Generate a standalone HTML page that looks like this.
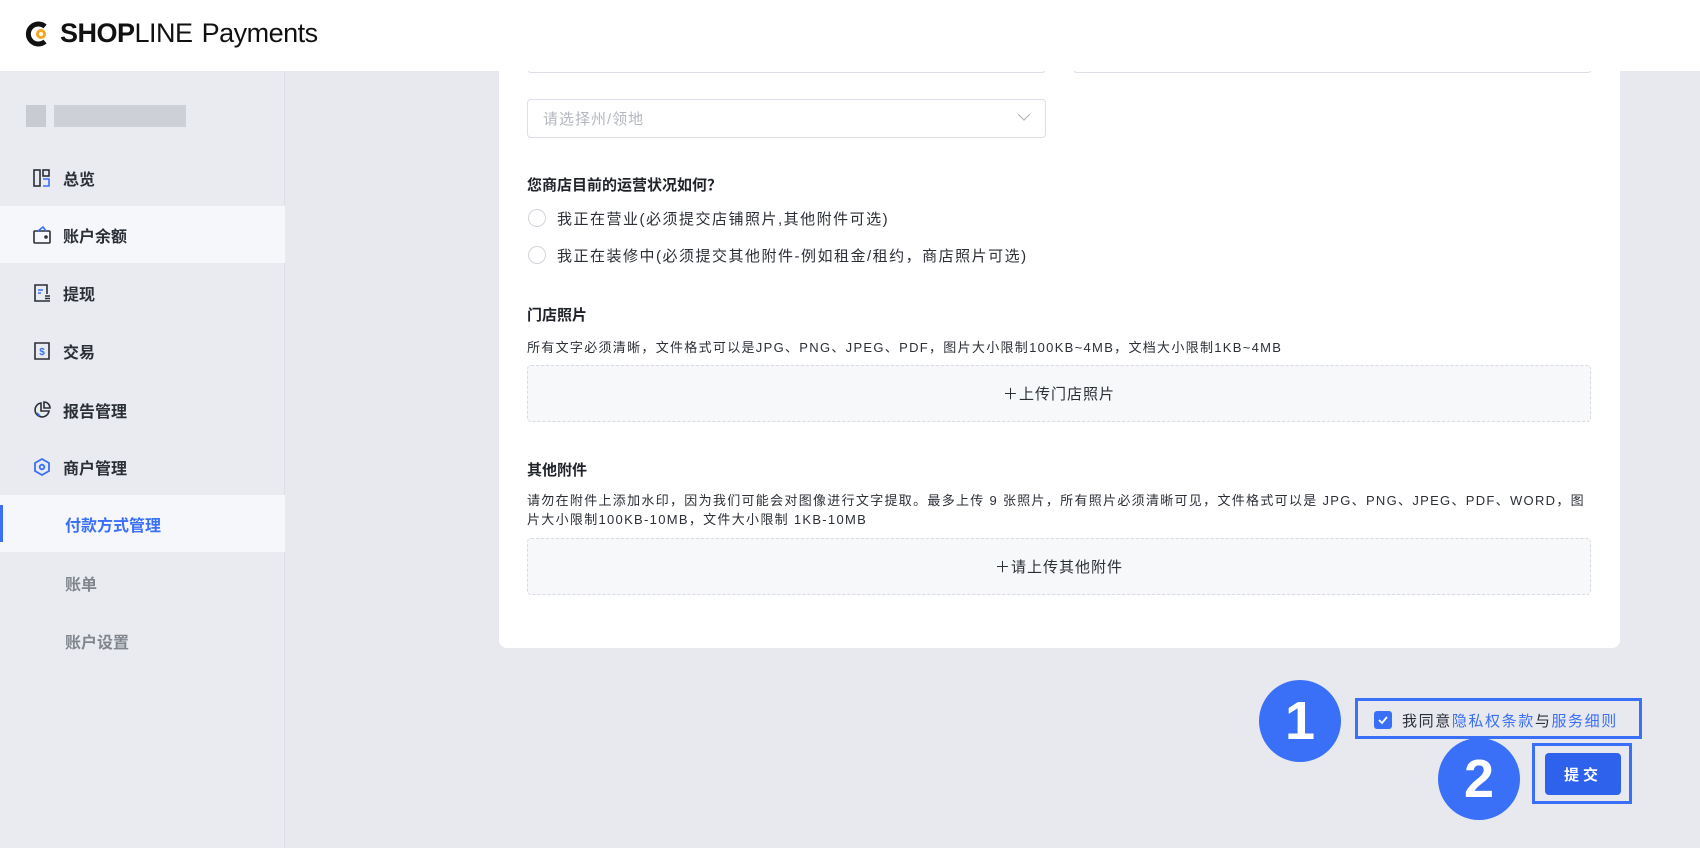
<!DOCTYPE html>
<html><head><meta charset="utf-8"><style>
*{margin:0;padding:0;box-sizing:border-box}
body{width:1700px;height:848px;overflow:hidden;background:#e7e9ee;font-family:"Liberation Sans","Noto Sans CJK SC",sans-serif;color:#1f2329;position:relative}
.abs{position:absolute}
.hdr{left:0;top:0;width:1700px;height:71px;background:#fff;z-index:5}
.side{left:0;top:71px;width:285px;height:777px;background:#e9ebf0;border-right:1px solid #dcdfe5}
.item{position:absolute;left:0;width:285px;height:57px;display:flex;align-items:center;font-size:16px;font-weight:bold;color:#2b2f36}
.item svg{position:absolute;left:33px}
.item span{position:absolute;left:63px}
.card{left:499px;top:60px;width:1121px;height:588px;background:#fff;border-radius:8px}
.t{position:absolute;white-space:nowrap}
.radio{position:absolute;left:528px;width:18px;height:18px;border:1px solid #d0d4da;border-radius:50%;background:#fff}
.up{position:absolute;left:527px;width:1064px;background:#f7f8fa;border:1px dashed #d8dbe0;border-radius:4px;display:flex;align-items:center;justify-content:center;font-size:15px;color:#2b2f36;letter-spacing:1px}
.circ{position:absolute;width:82px;height:82px;border-radius:50%;background:#3a6ff7;color:#fff;font-size:54px;display:flex;align-items:center;justify-content:center;font-family:"Liberation Sans",sans-serif;font-weight:bold}
</style></head><body>
<div class="abs hdr">
 <svg class="abs" style="left:24px;top:21px" width="26" height="26" viewBox="0 0 26 26"><path d="M21 5.5A10 10 0 1 0 21 20.5" fill="none" stroke="#111" stroke-width="5"/><circle cx="17" cy="13" r="5" fill="#f5a623"/><circle cx="17" cy="13" r="2" fill="#fff"/></svg>
 <div class="t" style="left:60px;top:18px;font-size:27px;letter-spacing:-0.5px;color:#111"><b>SHOP</b>LINE <span style="margin-left:2px">Payments</span></div>
</div>
<div class="abs side">
 <div class="abs" style="left:16px;top:24px;width:180px;height:36px;">
  <div class="abs" style="left:10px;top:10px;width:20px;height:22px;background:#c8cbd1"></div>
  <div class="abs" style="left:38px;top:10px;width:132px;height:22px;background:#cdd0d6"></div>
 </div>
 <div class="item" style="top:78px"><svg width="18" height="18" viewBox="0 0 18 18" fill="none" stroke="#2b2f36" stroke-width="1.6"><rect x="1" y="1" width="6" height="16"/><rect x="10" y="1" width="6" height="6"/><path d="M10 10h6v7h-6" stroke="#3a6ff7"/></svg><span>总览</span></div>
 <div class="item" style="top:135px;background:#f6f7fa"><svg width="18" height="18" viewBox="0 0 18 18" fill="none" stroke="#2b2f36" stroke-width="1.6"><rect x="1" y="5" width="16" height="12" rx="1"/><path d="M5 5l5-4 3 4" stroke="#3a6ff7"/><circle cx="13" cy="11" r="1" fill="#2b2f36"/></svg><span>账户余额</span></div>
 <div class="item" style="top:193px"><svg width="18" height="18" viewBox="0 0 18 18" fill="none" stroke="#2b2f36" stroke-width="1.6"><path d="M12 17H2V1h12v9"/><path d="M5 6h5M5 9h3" stroke="#3a6ff7"/><path d="M12 12h5M12 14.5h5M12 17h5"/></svg><span>提现</span></div>
 <div class="item" style="top:251px"><svg width="18" height="18" viewBox="0 0 18 18" fill="none" stroke="#2b2f36" stroke-width="1.6"><path d="M2 1h14v16H2z"/><text x="9" y="13" font-size="10" text-anchor="middle" fill="#3a6ff7" stroke="none" font-weight="bold">$</text></svg><span>交易</span></div>
 <div class="item" style="top:310px"><svg width="18" height="18" viewBox="0 0 18 18" fill="none" stroke="#2b2f36" stroke-width="1.6"><path d="M8 2a7 7 0 1 0 8 8H8z"/><path d="M11 1a6 6 0 0 1 6 6h-6z"/><path d="M4 12l3 3" stroke="#3a6ff7"/></svg><span>报告管理</span></div>
 <div class="item" style="top:367px"><svg width="18" height="18" viewBox="0 0 18 18" fill="none" stroke="#3a6ff7" stroke-width="1.8"><path d="M9 1l7 4v8l-7 4-7-4V5z"/><circle cx="9" cy="9" r="2.3"/></svg><span>商户管理</span></div>
 <div class="item" style="top:424px;background:#f6f7fa;color:#3a6ff7"><div class="abs" style="left:0;top:10px;width:3px;height:37px;background:#3a6ff7"></div><span style="left:65px">付款方式管理</span></div>
 <div class="item" style="top:483px;color:#80858e;font-weight:bold"><span style="left:65px">账单</span></div>
 <div class="item" style="top:541px;color:#80858e"><span style="left:65px">账户设置</span></div>
</div>
<div class="abs card"></div>
<div class="abs" style="left:527px;top:50px;width:519px;height:23px;border:1px solid #dcdfe5;border-top:none;border-radius:0 0 4px 4px;background:#fff"></div>
<div class="abs" style="left:1073px;top:50px;width:519px;height:23px;border:1px solid #dcdfe5;border-top:none;border-radius:0 0 4px 4px;background:#fff"></div>
<div class="abs" style="left:527px;top:99px;width:519px;height:39px;border:1px solid #dcdfe5;border-radius:4px;background:#fff"></div>
<div class="t" style="left:543px;top:108px;font-size:15px;color:#b3b7bf;letter-spacing:1px">请选择州/领地</div>
<svg class="abs" style="left:1017px;top:113px" width="14" height="9" viewBox="0 0 14 9"><path d="M1 1l6 6 6-6" fill="none" stroke="#b3b7bf" stroke-width="1.2"/></svg>
<div class="t" style="left:527px;top:174px;font-size:15px;font-weight:bold">您商店目前的运营状况如何？</div>
<div class="radio" style="top:209px"></div>
<div class="t" style="left:557px;top:208px;font-size:15px;color:#2b2f36;letter-spacing:1.5px">我正在营业(必须提交店铺照片,其他附件可选)</div>
<div class="radio" style="top:246px"></div>
<div class="t" style="left:557px;top:245px;font-size:15px;color:#2b2f36;letter-spacing:1.5px">我正在装修中(必须提交其他附件-例如租金/租约，商店照片可选)</div>
<div class="t" style="left:527px;top:304px;font-size:15px;font-weight:bold">门店照片</div>
<div class="t" style="left:527px;top:337px;font-size:13px;color:#2b2f36;letter-spacing:1.3px">所有文字必须清晰，文件格式可以是JPG、PNG、JPEG、PDF，图片大小限制100KB~4MB，文档大小限制1KB~4MB</div>
<div class="up" style="top:365px;height:57px">＋上传门店照片</div>
<div class="t" style="left:527px;top:459px;font-size:15px;font-weight:bold">其他附件</div>
<div class="t" style="left:527px;top:491px;font-size:13px;color:#2b2f36;line-height:19px;white-space:normal;width:1068px;letter-spacing:1.3px;word-break:break-all">请勿在附件上添加水印，因为我们可能会对图像进行文字提取。最多上传 9 张照片，所有照片必须清晰可见，文件格式可以是 JPG、PNG、JPEG、PDF、WORD，图片大小限制100KB-10MB，文件大小限制 1KB-10MB</div>
<div class="up" style="top:538px;height:57px">＋请上传其他附件</div>
<div class="circ" style="left:1259px;top:680px">1</div>
<div class="circ" style="left:1438px;top:738px">2</div>
<div class="abs" style="left:1355px;top:698px;width:287px;height:41px;border:3px solid #3a6ff7"></div>
<div class="abs" style="left:1374px;top:711px;width:18px;height:18px;border-radius:3px;background:#3a6ff7"></div>
<svg class="abs" style="left:1377px;top:714px" width="12" height="12" viewBox="0 0 12 12"><path d="M2 6l3 3 5-6" fill="none" stroke="#fff" stroke-width="1.8"/></svg>
<div class="t" style="left:1402px;top:710px;font-size:15px;color:#2b2f36;letter-spacing:1.6px">我同意<span style="color:#3a6ff7">隐私权条款</span>与<span style="color:#3a6ff7">服务细则</span></div>
<div class="abs" style="left:1532px;top:743px;width:100px;height:61px;border:3px solid #3a6ff7"></div>
<div class="abs" style="left:1545px;top:753px;width:76px;height:42px;border-radius:4px;background:#2f62ec;color:#fff;font-size:15px;font-weight:bold;display:flex;align-items:center;justify-content:center;letter-spacing:4px">提交</div>
</body></html>
